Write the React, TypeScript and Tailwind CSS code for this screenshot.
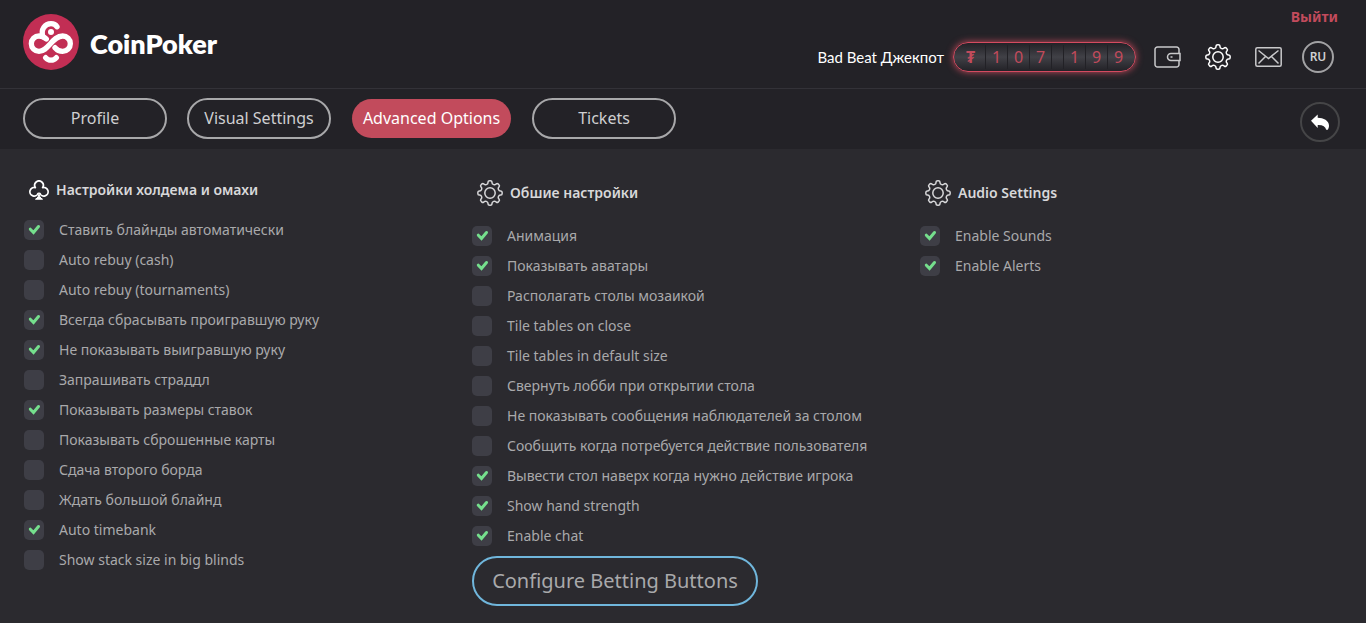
import type { ReactNode } from "react";

type Option = [label: string, checked: boolean];

const holdem: Option[] = [
  ["Ставить блайнды автоматически", true],
  ["Auto rebuy (cash)", false],
  ["Auto rebuy (tournaments)", false],
  ["Всегда сбрасывать проигравшую руку", true],
  ["Не показывать выигравшую руку", true],
  ["Запрашивать страддл", false],
  ["Показывать размеры ставок", true],
  ["Показывать сброшенные карты", false],
  ["Сдача второго борда", false],
  ["Ждать большой блайнд", false],
  ["Auto timebank", true],
  ["Show stack size in big blinds", false],
];

const general: Option[] = [
  ["Анимация", true],
  ["Показывать аватары", true],
  ["Располагать столы мозаикой", false],
  ["Tile tables on close", false],
  ["Tile tables in default size", false],
  ["Свернуть лобби при открытии стола", false],
  ["Не показывать сообщения наблюдателей за столом", false],
  ["Сообщить когда потребуется действие пользователя", false],
  ["Вывести стол наверх когда нужно действие игрока", true],
  ["Show hand strength", true],
  ["Enable chat", true],
];

const audio: Option[] = [
  ["Enable Sounds", true],
  ["Enable Alerts", true],
];

const tabs = ["Profile", "Visual Settings", "Advanced Options", "Tickets"];
const jackpot = ["1", "0", "7", "", "1", "9", "9"];

// Outline of an eight-toothed gear with softened corners, centred on (13, 13).
function gearPath() {
  const corners: [number, number][] = [];
  for (let tooth = 0; tooth < 8; tooth++) {
    for (const [offset, radius] of [[-13, 9.3], [-9, 12.3], [9, 12.3], [13, 9.3]]) {
      const angle = ((tooth * 45 + offset) * Math.PI) / 180;
      corners.push([13 + radius * Math.cos(angle), 13 + radius * Math.sin(angle)]);
    }
  }
  const toward = (a: [number, number], b: [number, number]) =>
    `${(a[0] + (b[0] - a[0]) * 0.4).toFixed(2)} ${(a[1] + (b[1] - a[1]) * 0.4).toFixed(2)}`;
  const parts = corners.map((corner, i) => {
    const previous = corners[(i + corners.length - 1) % corners.length];
    const next = corners[(i + 1) % corners.length];
    return `${i ? "L" : "M"}${toward(corner, previous)}Q${corner[0].toFixed(2)} ${corner[1].toFixed(2)} ${toward(corner, next)}`;
  });
  return parts.join("") + "Z";
}

const gearOutline = gearPath();

function Logo() {
  return (
    <svg viewBox="0 0 168 168" className="size-14 shrink-0" fill="none" stroke="#fff" strokeWidth="16" strokeLinecap="round" strokeLinejoin="round" aria-hidden="true">
      <circle cx="84" cy="84" r="84" fill="#c22e54" stroke="none" />
      <path d="M70 75C63 69 56 66 48 66a23 23 0 0 0 0 46C76 112 88 66 119 66a23 23 0 0 1 0 46c-9 0-17-4-23-11" />
      <path d="M60 68c-8-22 6-39 24-39 8 0 14 3 18 9" />
      <circle cx="84" cy="54" r="9" fill="#fff" stroke="none" />
      <path d="M68 131c9 10 23 10 32 0" />
    </svg>
  );
}

function Gear({ className }: { className: string }) {
  return (
    <svg viewBox="0 0 26 26" className={className} fill="none" stroke="currentColor" strokeWidth="1.5" strokeLinejoin="round" aria-hidden="true">
      <path d={gearOutline} />
      <circle cx="13" cy="13" r="5.2" />
    </svg>
  );
}

function Club() {
  return (
    <svg viewBox="0 0 20 20" className="size-5" fill="none" stroke="#fff" strokeWidth="1.7" strokeLinejoin="round" aria-hidden="true">
      <path d="M9.300 13A4.300 4.300 0 1 1 6.400 7.600 4.300 4.300 0 1 1 13.600 7.600 4.300 4.300 0 1 1 10.700 13" />
      <path d="M10 12.500c0 3-1 5.500-3.500 6.700h7C11 18 10 15.500 10 12.500z" fill="#fff" strokeWidth="1" />
    </svg>
  );
}

function Section({ icon, title, options, children }: { icon: ReactNode; title: string; options: Option[]; children?: ReactNode }) {
  return (
    <section className="pl-0.5">
      <h2 className="flex items-center gap-[7px] pl-[5px] text-sm font-semibold leading-5 text-[#d8d8da]">
        {icon}
        {title}
      </h2>
      <ul className="mt-5 flex flex-col gap-2.5">
        {options.map(([label, checked]) => (
          <li key={label}>
            <label className="flex h-5 items-center gap-[15px] text-sm text-[#a9a9ab]">
              <span className="grid size-5 shrink-0">
                <input type="checkbox" defaultChecked={checked} className="peer col-start-1 row-start-1 size-5 appearance-none rounded-[5px] bg-[#3e3e46]" />
                <svg viewBox="0 0 20 20" className="pointer-events-none col-start-1 row-start-1 hidden size-5 peer-checked:block" fill="none" stroke="#75df8d" strokeWidth="3" strokeLinecap="round" aria-hidden="true">
                  <path d="M6.300 9.200l3.200 3.300 5-6" />
                </svg>
              </span>
              {label}
            </label>
          </li>
        ))}
      </ul>
      {children}
    </section>
  );
}

export default function App() {
  return (
    <div className="min-h-screen bg-[#2b2a2f] font-['Noto_Sans',sans-serif]">
      <header className="flex h-[89px] justify-between border-b border-[#333238] bg-[#232227] pl-[23px] pr-8">
        <a href="#" className="flex items-center gap-[11px] self-start pt-3.5 text-white">
          <Logo />
          <span className="pt-1 font-[Lato,sans-serif] text-[27px] font-extrabold leading-8">CoinPoker</span>
        </a>
        <div className="flex flex-col items-end pt-2">
          <a href="#" className="-mr-1 text-sm font-bold leading-[18px] text-[#c24b5c]">Выйти</a>
          <div className="mt-[15px] flex items-center">
            <span className="mr-[9px] font-[Lato,'Noto_Sans',sans-serif] text-[15px] text-white">Bad Beat Джекпот</span>
            <div className="mr-[18px] flex h-[30px] w-[183px] items-center rounded-full border border-[#d54b60] bg-linear-to-b from-[#232227] via-[#414147] to-[#232227] pl-2 pr-1.5 text-base text-[#c24b5c] shadow-[0_0_7px_#c24b5c]">
              <span className="w-[23px] pr-1.5 text-center font-bold">₮</span>
              {jackpot.map((digit, i) => (
                <span key={i} className={digit ? "h-6 w-[22px] border-l border-[#222126] text-center leading-6" : "h-6 w-3 border-l border-[#222126]"}>{digit}</span>
              ))}
            </div>
            <button type="button" aria-label="Wallet" className="mr-6 text-[#c9c9cb]">
              <svg viewBox="0 0 27 22" className="h-[22px] w-[27px]" fill="none" stroke="currentColor" strokeWidth="1.500">
                <path d="M25 7.500V3.500a2.500 2.500 0 0 0-2.500-2.500h-19A2.500 2.500 0 0 0 1 3.500v15A2.500 2.500 0 0 0 3.500 21h19a2.500 2.500 0 0 0 2.500-2.500v-4" />
                <path d="M26 7.500h-9a3.500 3.500 0 0 0 0 7h9z" />
                <path d="M16.500 11h2" />
              </svg>
            </button>
            <button type="button" aria-label="Settings" className="mr-6 text-white"><Gear className="size-[26px]" /></button>
            <button type="button" aria-label="Messages" className="mr-5 text-[#c9c9cb]">
              <svg viewBox="0 0 27 20" className="h-5 w-[27px]" fill="none" stroke="currentColor" strokeWidth="1.500">
                <rect x=".8" y=".8" width="25.400" height="18.400" rx="1.500" />
                <path d="M3.500 3.500l10 8 10-8M3.500 16.500l7-7M23.500 16.500l-7-7" />
              </svg>
            </button>
            <button type="button" className="size-8 rounded-full border-2 border-[#a2a2a4] text-xs font-semibold text-[#d0d0d2]">RU</button>
          </div>
        </div>
      </header>
      <nav className="flex h-[60px] items-center justify-between bg-[#232227] pl-[23px] pr-[26px]">
        <div className="flex items-center gap-5 pb-0.5">
          {tabs.map((tab) => (
            <button key={tab} type="button" className={tab === "Advanced Options" ? "mx-px h-[39px] w-[159px] rounded-full bg-[#c24b5c] text-base text-white" : "h-[41px] w-36 rounded-full border-2 border-[#a8a8aa] text-base text-[#cfcfd1]"}>
              {tab}
            </button>
          ))}
        </div>
        <button type="button" aria-label="Back" className="mt-1.5 grid size-10 place-items-center rounded-full border-2 border-[#454547] text-white">
          <svg viewBox="0 0 18 16" className="h-4 w-[18px]" fill="currentColor" aria-hidden="true">
            <path d="M0 6.800L6.700.5v3.200C12.500 3.700 18 6.500 18 11.500c0 1.700-.4 3-1.200 4.200h-1.600c-.8-3.400-3.500-5-8.500-4.800v3z" />
          </svg>
        </button>
      </nav>
      <main className="grid grid-cols-3 pb-4 pl-[22px] pt-[31px]">
        <Section icon={<Club />} title="Настройки холдема и омахи" options={holdem} />
        <Section icon={<Gear className="size-[26px]" />} title="Обшие настройки" options={general}>
          <button type="button" className="mt-2.5 h-[50px] w-[286px] rounded-full border-2 border-[#70b6dc] text-xl text-[#a9a9ab]">Configure Betting Buttons</button>
        </Section>
        <Section icon={<Gear className="size-[26px]" />} title="Audio Settings" options={audio} />
      </main>
    </div>
  );
}
